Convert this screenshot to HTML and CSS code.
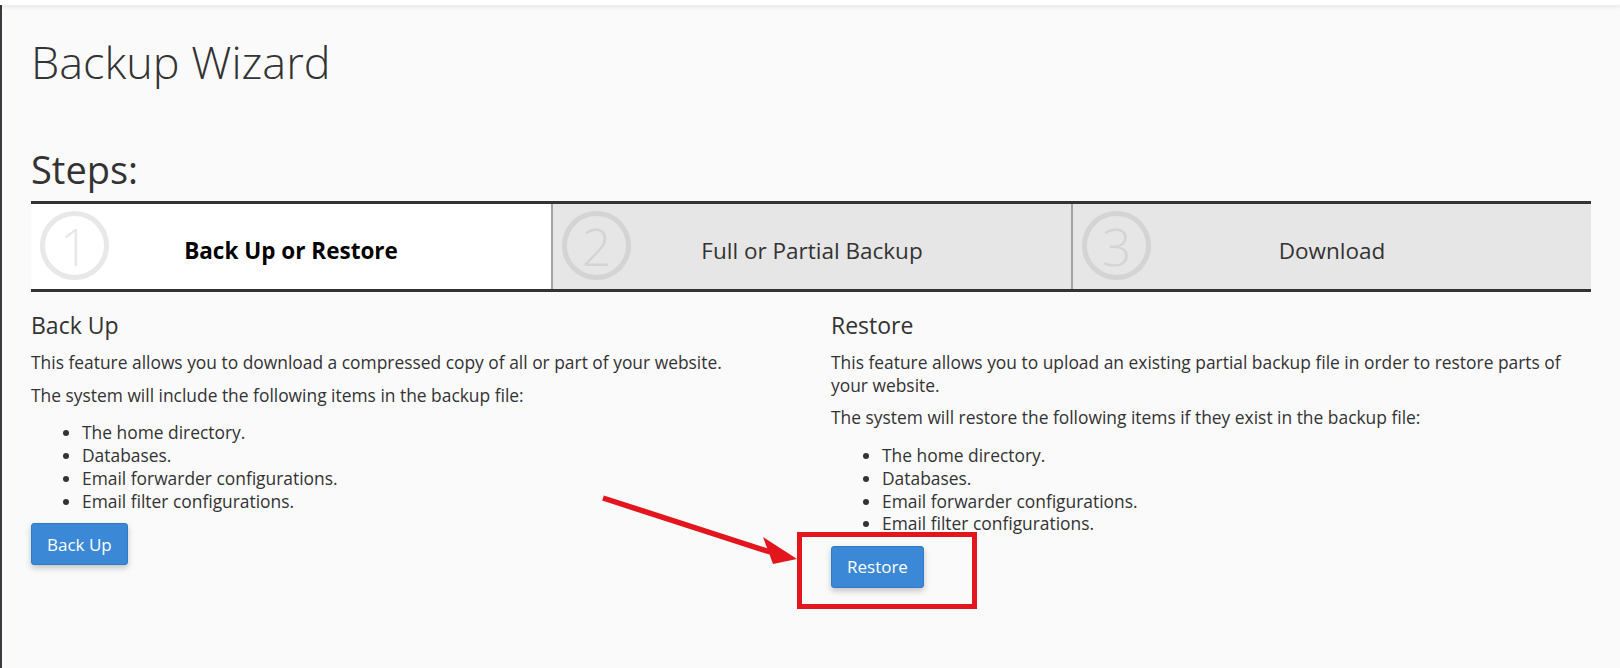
FILE: index.html
```html
<!DOCTYPE html>
<html lang="en">
<head>
<meta charset="utf-8">
<title>Backup Wizard</title>
<link rel="stylesheet" href="styles.css">
</head>
<body>
<div class="topbar"></div>
<div class="page">
  <h1 class="title">Backup Wizard</h1>
  <h2 class="steps-title">Steps:</h2>
  <div class="steps">
    <div class="step active">
      <span class="num">1</span>
      <span class="label">Back Up or Restore</span>
    </div>
    <div class="step">
      <span class="num">2</span>
      <span class="label">Full or Partial Backup</span>
    </div>
    <div class="step">
      <span class="num">3</span>
      <span class="label">Download</span>
    </div>
  </div>
  <div class="columns">
    <section class="col">
      <h3 class="col-title">Back Up</h3>
      <p>This feature allows you to download a compressed copy of all or part of your website.</p>
      <p>The system will include the following items in the backup file:</p>
      <ul>
        <li>The home directory.</li>
        <li>Databases.</li>
        <li>Email forwarder configurations.</li>
        <li>Email filter configurations.</li>
      </ul>
      <button class="btn">Back Up</button>
    </section>
    <section class="col">
      <h3 class="col-title">Restore</h3>
      <p>This feature allows you to upload an existing partial backup file in order to restore parts of your website.</p>
      <p>The system will restore the following items if they exist in the backup file:</p>
      <ul>
        <li>The home directory.</li>
        <li>Databases.</li>
        <li>Email forwarder configurations.</li>
        <li>Email filter configurations.</li>
      </ul>
      <button class="btn">Restore</button>
    </section>
  </div>
</div>
<div class="highlight-box"></div>
<svg class="arrow" width="220" height="90" viewBox="0 0 220 90">
  <line x1="13" y1="18" x2="180" y2="72" stroke="#e3161d" stroke-width="5.5" stroke-linecap="butt"/>
  <polygon points="207,79 173,57 183,84" fill="#e3161d"/>
</svg>
</body>
</html>
```

FILE: styles.css
```css
html, body {
  margin: 0;
  padding: 0;
}
body {
  background: #fafafa;
  font-family: "Open Sans", "Noto Sans", sans-serif;
  color: #333;
  font-size: 17.4px;
  line-height: 22.7px;
  min-height: 668px;
  overflow: hidden;
}
.topbar {
  height: 5px;
  background: #fff;
  box-shadow: 0 2px 4px rgba(0,0,0,0.08);
  position: relative;
  z-index: 1;
}
.page {
  border-left: 2px solid #3a3a3e;
  min-height: 663px;
  padding: 0 29px 0 29px;
  box-sizing: border-box;
}
.title {
  margin: 0;
  padding-top: 32px;
  font-size: 45px;
  font-weight: 300;
  line-height: 50px;
  color: #333;
}
.steps-title {
  margin: 62px 0 12px 0;
  font-size: 38px;
  font-weight: 400;
  line-height: 40px;
  color: #333;
}
.steps {
  display: grid;
  grid-template-columns: 1fr 1fr 1fr;
  border-top: 3px solid #333;
  border-bottom: 3px solid #333;
  height: 85px;
}
.step {
  position: relative;
  background: #e6e6e6;
  border-left: 2px solid #a3a3a3;
  display: flex;
  align-items: center;
  justify-content: center;
}
.step.active {
  background: #fff;
  border-left: none;
}
.num {
  position: absolute;
  left: 9px;
  top: 7px;
  width: 59px;
  height: 59px;
  border: 5px solid #d4d4d4;
  border-radius: 50%;
  color: #d4d4d4;
  font-size: 52px;
  font-weight: 300;
  line-height: 59px;
  text-align: center;
}
.step.active .num {
  border-color: #e8e8e8;
  color: #e8e8e8;
}
.label {
  font-size: 22.5px;
  padding-top: 10px;
  color: #333;
}
.step.active .label {
  font-weight: 700;
  color: #000;
}
.columns {
  display: grid;
  grid-template-columns: 1fr 1fr;
  column-gap: 40px;
  padding-top: 20px;
}
.col-title {
  margin: 0 0 13px 0;
  font-size: 23px;
  font-weight: 400;
  line-height: 26px;
  color: #333;
}
p {
  margin: 0 0 10px 0;
}
ul {
  margin: 15px 0 11px 0;
  padding-left: 51px;
}
.btn {
  display: inline-block;
  font-family: "Open Sans", "Noto Sans", sans-serif;
  font-size: 17px;
  color: #fff;
  background: #3a88d6;
  border: 1px solid #2f7bc6;
  border-radius: 3px;
  height: 42px;
  padding: 0 15px;
  box-shadow: 0 3px 6px rgba(0,0,0,0.22);
  cursor: pointer;
}
.highlight-box {
  position: absolute;
  left: 797px;
  top: 532px;
  width: 170px;
  height: 67px;
  border: 5px solid #e3161d;
}
.arrow {
  position: absolute;
  left: 590px;
  top: 480px;
}
```
